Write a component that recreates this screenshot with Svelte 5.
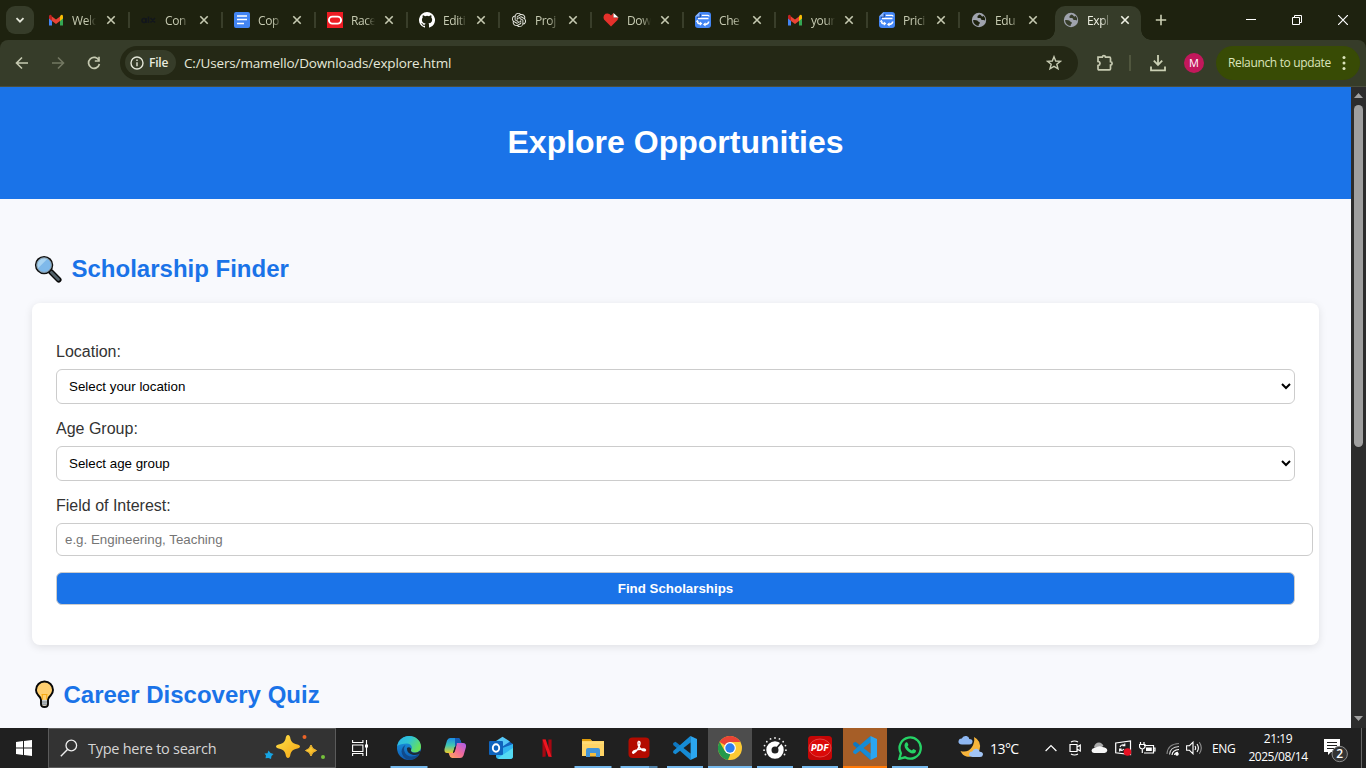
<script>
  const tabs = [
    { icon: 'gmail', title: 'Welc', w: 93 },
    { icon: 'alx', title: 'Con', w: 93 },
    { icon: 'doc', title: 'Cop', w: 93 },
    { icon: 'oracle', title: 'Race', w: 92 },
    { icon: 'github', title: 'Editi', w: 92 },
    { icon: 'gpt', title: 'Proj', w: 92 },
    { icon: 'heart', title: 'Dow', w: 92 },
    { icon: 'swap', title: 'Che', w: 92 },
    { icon: 'gmail', title: 'your', w: 92 },
    { icon: 'swap', title: 'Prici', w: 92 },
    { icon: 'globe', title: 'Edu', w: 92 },
    { icon: 'globe', title: 'Expl', w: 92, active: true }
  ];
  const apps = [
    { icon: 'edge', line: 37 },
    { icon: 'copilot' },
    { icon: 'outlook' },
    { icon: 'netflix' },
    { icon: 'files', line: 37 },
    { icon: 'acrobat', line: 37, split: true },
    { icon: 'code', line: 36 }
  ];
  const apps2 = [
    { icon: 'chrome', line: 44, state: 'current' },
    { icon: 'meter', line: 36 },
    { icon: 'pdf', line: 36 },
    { icon: 'code', line: 44, state: 'alert' },
    { icon: 'whatsapp', line: 36 }
  ];
  const dots = Array.from({ length: 11 }, (_, i) => {
    const a = (150 + i * 24) * Math.PI / 180;
    return { x: 12 + 11 * Math.cos(a), y: 13 + 11 * Math.sin(a) };
  });
</script>

{#snippet favicon(name)}
  <svg class="fav" width="16" height="16" viewBox="0 0 16 16">
    {#if name === 'gmail'}
      <path d="M1 4v9.500h3V7z" fill="#4285f4" /><path d="M15 4v9.500h-3V7z" fill="#34a853" />
      <path d="M12 4.200 13 3q2-1 2 1.500v2L12 9z" fill="#fbbc04" />
      <path d="M4 4.500 8 7.600l4-3.100V9l-4 3-4-3z" fill="#ea4335" />
      <path d="M1 4.500Q1 2 3.200 2.900L4 4.500V9L1 6.600z" fill="#c5221f" />
    {:else if name === 'alx'}
      <g fill="none" stroke="#12161c" stroke-width="1.500"><circle cx="3" cy="8.500" r="2" /><path d="M5.300 6v5M7.500 4.500V11M9.500 6l4.500 4.500M14 6l-4.500 4.500" /></g>
    {:else if name === 'doc'}
      <rect width="16" height="16" rx="2" fill="#4285f4" />
      <path d="M3 4h10M3 7.500h10M3 11.500h7" stroke="#fff" stroke-width="1.700" />
    {:else if name === 'oracle'}
      <rect width="16" height="16" fill="#ed1c24" />
      <rect x="1.900" y="4.600" width="12.200" height="7" rx="3.500" fill="none" stroke="#fff" stroke-width="1.900" />
    {:else if name === 'github'}
      <path fill="#fff" d="M8 0a8 8 0 0 0-2.530 15.590c.4.070.55-.17.55-.38v-1.490c-2.230.49-2.700-.95-2.700-.95-.36-.92-.89-1.170-.89-1.170-.73-.5.060-.49.060-.49.800.060 1.230.83 1.230.83.710 1.220 1.870.87 2.330.66.070-.52.280-.87.510-1.070-1.780-.2-3.640-.89-3.640-3.950 0-.87.310-1.590.82-2.150-.08-.2-.36-1.020.08-2.120 0 0 .67-.21 2.200.82a7.600 7.600 0 0 1 4 0c1.530-1.040 2.200-.82 2.200-.82.440 1.100.160 1.920.080 2.120.51.560.82 1.270.82 2.150 0 3.070-1.870 3.750-3.650 3.950.29.250.54.730.54 1.480v2.200c0 .21.150.46.550.38A8 8 0 0 0 8 0Z" />
    {:else if name === 'gpt'}
      <path transform="translate(.9 .9) scale(.592)" fill="#e8e9e2" d="M22.2819 9.8211a5.9847 5.9847 0 0 0-.5157-4.9108 6.0462 6.0462 0 0 0-6.5098-2.9A6.0651 6.0651 0 0 0 4.9807 4.1818a5.9847 5.9847 0 0 0-3.9977 2.9 6.0462 6.0462 0 0 0 .7427 7.0966 5.98 5.98 0 0 0 .511 4.9107 6.051 6.051 0 0 0 6.5146 2.9001A5.9847 5.9847 0 0 0 13.2599 24a6.0557 6.0557 0 0 0 5.7718-4.2058 5.9894 5.9894 0 0 0 3.9977-2.9001 6.0557 6.0557 0 0 0-.7475-7.0729zm-9.022 12.6081a4.4755 4.4755 0 0 1-2.8764-1.0408l.1419-.0804 4.7783-2.7582a.7948.7948 0 0 0 .3927-.6813v-6.7369l2.02 1.1686a.071.071 0 0 1 .038.052v5.5826a4.504 4.504 0 0 1-4.4945 4.4944zm-9.6607-4.1254a4.4708 4.4708 0 0 1-.5346-3.0137l.142.0852 4.783 2.7582a.7712.7712 0 0 0 .7806 0l5.8428-3.3685v2.3324a.0804.0804 0 0 1-.0332.0615L9.74 19.9502a4.4992 4.4992 0 0 1-6.1408-1.6464zM2.3408 7.8956a4.485 4.485 0 0 1 2.3655-1.9728V11.6a.7664.7664 0 0 0 .3879.6765l5.8144 3.3543-2.0201 1.1685a.0757.0757 0 0 1-.071 0l-4.8303-2.7865A4.504 4.504 0 0 1 2.3408 7.872zm16.5963 3.8558L13.1038 8.364 15.1192 7.2a.0757.0757 0 0 1 .071 0l4.8303 2.7913a4.4944 4.4944 0 0 1-.6765 8.1042v-5.6772a.79.79 0 0 0-.407-.667zm2.0107-3.0231l-.142-.0852-4.7735-2.7818a.7759.7759 0 0 0-.7854 0L9.409 9.2297V6.8974a.0662.0662 0 0 1 .0284-.0615l4.8303-2.7866a4.4992 4.4992 0 0 1 6.6802 4.66zM8.3065 12.863l-2.02-1.1638a.0804.0804 0 0 1-.038-.0567V6.0742a4.4992 4.4992 0 0 1 7.3757-3.4537l-.142.0805L8.704 5.459a.7948.7948 0 0 0-.3927.6813zm1.0976-2.3654l2.602-1.4998 2.6069 1.4998v2.9994l-2.5974 1.4997-2.6067-1.4997Z" />
    {:else if name === 'heart'}
      <path d="M8 14.500 1 7.500Q-.5 4 2.500 1.800 6 .5 8 3.500L10.500 1v4.500H15.500L14.500 8z" fill="#e4312b" />
      <path d="m10.500 1 5 4.500h-5z" fill="#fff" />
    {:else if name === 'swap'}
      <path d="M4.500 0H13q3 0 3 3v10q0 3-3 3H3q-3 0-3-3V4.500z" fill="#4285f4" />
      <path d="M0 4.500 4.500 0v4.500z" fill="#8db6fa" /><path d="M2 5.300h3.300V2" stroke="#1d3f88" stroke-width=".9" fill="none" />
      <path d="M6.800 3.300H13q1 0 1 1.200M3 6.500h10.500" stroke="#fff" stroke-width="1.300" fill="none" />
      <path d="M2.300 9.500q.3 2 2.200 2.100h1M13.700 9.500q-.3 2.700-3 2.900h-1" stroke="#fff" stroke-width="1.600" fill="none" />
      <path d="M4.900 9.400v4.400l2.500-2.200zM10.500 10.200v4.400L8 12.400zM.7 9.800h3.300L2.300 7.800z" fill="#fff" />
    {:else}
      <circle cx="8" cy="8" r="7.200" fill="#9fa3ad" />
      <path d="M8.300 2.400Q5.900 3.800 6.400 5.400q.8.900 2.200.6 1.300-.1 1.600 1.400.8 1 2.200.6l1.700.5q.3-3-1.600-4.700-.8 1.300-1.900.2Q10 2.600 8.300 2.400M1.900 8.200q2.600-.6 4.400.4.800 1.300 1.900 1.300 1 .4.500 1.500-1.300.8-1.100 2.500Q3 13.500 1.900 8.200" fill="var(--hole)" />
    {/if}
  </svg>
{/snippet}

{#snippet app(name)}
  <svg width="24" height="24" viewBox="0 0 24 24">
    {#if name === 'edge'}
      <defs>
        <linearGradient id="eg1" x1="0" y1="0" x2="1" y2=".5"><stop stop-color="#2bb4e8" /><stop offset=".5" stop-color="#2fc4d5" /><stop offset="1" stop-color="#66e05c" /></linearGradient>
        <linearGradient id="eg2" x1="0" y1="0" x2="0" y2="1"><stop stop-color="#1b9de2" /><stop offset="1" stop-color="#0f5cb5" /></linearGradient>
      </defs>
      <circle cx="12" cy="12" r="12" fill="url(#eg2)" />
      <path d="M.2 10C1.500 3.800 6.500 0 12 0c7 0 12 5 12 10.500 0 4-3 6-6 6-2.500 0-4.500-1-4-2.500 2-2 .5-6.500-4-6.500C6 7.500 2 8.500.2 10" fill="url(#eg1)" />
      <path d="M8.500 9C5 13 8 20.500 14.500 20.500q4 .1 8-2.700Q19 24 12 24 5 22 4.500 15.500 5 10.500 8.500 9" fill="#114a8b" />
      <path d="M14 14c-.5 1.500 1.500 2.800 4 2.800q2.500 0 5.200-2l1 2q-4.200 3-8.700 2Q9.500 17 10 12q2-1.500 4 .5z" fill="#202020" opacity=".85" />
    {:else if name === 'copilot'}
      <defs>
        <linearGradient id="cp1" x1="0" y1="0" x2="0" y2="1"><stop stop-color="#1b8de6" /><stop offset=".5" stop-color="#42c7b0" /><stop offset="1" stop-color="#eccb2a" /></linearGradient>
        <linearGradient id="cp2" x1="1" y1="0" x2="0" y2="1"><stop stop-color="#a65cf0" /><stop offset=".5" stop-color="#f16b99" /><stop offset="1" stop-color="#ffac55" /></linearGradient>
      </defs>
      <path d="M7 2h8q2 0 2.700 3l1 3h-4q-2 0-2.500 2L10 17H4q-3 0-2.500-4L4 4.500Q5 2 7 2" fill="url(#cp1)" />
      <path d="M17 22H9q-2 0-2.700-3l-.7-2h3.800q2 0 2.600-2L14 7h6q3.500 0 3 4l-2.500 8.500Q19.500 22 17 22" fill="url(#cp2)" />
      <path d="M12 2h3q2 0 2.700 3l.7 2H14l-2 5z" fill="#1559b8" /><path d="m13 10.500-1.500 5q-.5 1.500-1.500 1.500l1.500-5.500q.5-1 1.500-1" fill="#202020" />
    {:else if name === 'outlook'}
      <path d="M5 9 14 1.500 24 8v3L12 17z" fill="#1266c0" /><path d="m5.500 6 8-5.200 7.500 4.700-9 6z" fill="#56c8f7" />
      <path d="M8 14 24 8v12q0 3-3 3H10q-3 0-3-3z" fill="#31b5f0" /><path d="m9 22 15-10v8q0 3-3 3H10z" fill="#54daf2" />
      <rect y="5" width="14" height="14" rx="1" fill="#0f64bd" /><ellipse cx="7" cy="12" rx="3.200" ry="3.700" fill="none" stroke="#fff" stroke-width="1.900" />
    {:else if name === 'netflix'}
      <path d="M7.500 3.500h3.200v17l-3.200.4zM13.400 3.500h3.200v17.400l-3.200-.4z" fill="#a70711" /><path d="M7.500 3.500h3.200l5.900 17.400-3.200-.4z" fill="#ef1621" />
    {:else if name === 'files'}
      <path d="M1 3h8l2 2h12v15H1z" fill="#ffd466" /><path d="M1 3h8l2 2H1z" fill="#df9c0a" /><path d="M1 6h22v2H1z" fill="#ffdb75" />
      <path d="M5 21v-7q0-2 2-2h10q2 0 2 2v7h-4v-4H9v4z" fill="#4294d8" /><path d="M9 17h6v3.500H9z" fill="#f4bd3c" />
    {:else if name === 'acrobat'}
      <rect x="1.500" y="1.500" width="21" height="20.500" rx="4" fill="#b30b00" />
      <path d="M11.400 5.500q1.800-.6 1.500 2.400Q12 13.500 6.500 17.200 4.800 17 6.500 15.200 11 12.800 17 13q2.300.8 1 1.700-4 .2-6.700-5.400-.7-3 .1-3.800" fill="none" stroke="#fff" stroke-width="1.500" />
    {:else if name === 'code'}
      <path d="M17.500 0 7.300 9.400 2.500 5.700.2 6.900v2L17.500 24z" fill="#0f77bf" />
      <path d="M17.500 24 7.300 14.600l-4.800 3.700-2.300-1.200v-2L17.500 0z" fill="#168bd4" />
      <path d="M17.500 0 24 3v18l-6.500 3V0" fill="#2ba6f0" /><path d="M17.500 6.500v11L10.500 12z" fill="var(--hole)" />
    {:else if name === 'chrome'}
      <circle cx="12" cy="12" r="12" fill="#fcc934" />
      <path d="M12 12 1.600 6A12 12 0 0 1 22.400 6H12z" fill="#ea4335" /><path d="M1.600 6 6.800 15l5.200 3v-.1L12 24A12 12 0 0 1 1.600 6" fill="#23994b" /><path d="m17.200 15-5.200 9q-1 0-2-.2L13 17z" fill="#fcc934" />
      <circle cx="12" cy="12" r="5.900" fill="#fff" /><circle cx="12" cy="12" r="4.700" fill="#2d7df0" />
    {:else if name === 'meter'}
      {#each dots as d}<circle cx={d.x} cy={d.y} r=".9" fill="#eee" />{/each}
      <circle cx="12" cy="14" r="6.100" fill="none" stroke="#fff" stroke-width="5.200" /><path d="m12 14 6-7" stroke="#202020" stroke-width="1.700" /><circle cx="12" cy="14" r="2.800" fill="#202020" />
    {:else if name === 'pdf'}
      <rect width="24" height="24" rx="3.500" fill="#c50606" /><ellipse cx="12" cy="12" rx="11" ry="9" fill="#db0909" stroke="#ee6868" stroke-width=".6" />
      <text x="12" y="15.400" text-anchor="middle" font-size="8.500" font-weight="700" font-style="italic" fill="#fff" font-family="DejaVu Sans, sans-serif" textLength="18" lengthAdjust="spacingAndGlyphs">PDF</text>
    {:else if name === 'whatsapp'}
      <path d="m1.400 22.800 1.500-5.600a10.600 10.600 0 1 1 4.100 4.100z" fill="#202020" stroke="#25d366" stroke-width="2.300" />
      <path d="M8 6.300q1-.5 1.500.5l.9 2q.1.600-1 1.800 1.500 2.900 4.500 4 1-1.500 1.500-1.500l2.500 1.200q.5 3-3 3.200-3.700-.3-7-4.300Q5 9 8 6.300" fill="#25d366" />
    {/if}
  </svg>
{/snippet}

<div class="screen">
  <div class="browser">
    <div class="tabstrip">
      <div class="tabsearch"><svg width="10" height="10" viewBox="0 0 10 10"><path d="m1.500 3.200 3.500 3.500 3.500-3.500" fill="none" stroke="#e3e6d8" stroke-width="1.800" /></svg></div>
      {#each tabs as t, i}
        <div class="tab" class:active={t.active} class:last={i >= 10} style:width={`${t.w}px`}>
          {@render favicon(t.icon)}
          <span class="title">{t.title}</span>
          <svg class="close" width="10" height="10" viewBox="0 0 10 10"><path d="m1.300 1.300 7.400 7.400M8.700 1.300 1.300 8.700" fill="none" stroke="currentColor" stroke-width="1.600" /></svg>
        </div>
      {/each}
      <svg class="newtab" width="12" height="12" viewBox="0 0 12 12"><path d="M6 .8v10.400M.8 6h10.400" stroke="#cbd0b4" stroke-width="1.600" /></svg>
      <div class="winbtns">
        <svg width="10" height="10" viewBox="0 0 10 10"><path d="M0 4.500h10" stroke="#fff" /></svg>
        <svg width="10" height="10" viewBox="0 0 10 10"><path d="M.5 2.500h7v7h-7zM2.500 2.500v-2h7v7h-2" fill="none" stroke="#fff" /></svg>
        <svg width="10" height="10" viewBox="0 0 10 10"><path d="m0 0 10 10M10 0 0 10" stroke="#fff" stroke-width="1.200" /></svg>
      </div>
    </div>
    <div class="toolbar">
      <svg class="nav" width="16" height="16" viewBox="0 0 16 16"><path d="M14 8H3M8 2.500 2.500 8 8 13.500" fill="none" stroke="#c6cab1" stroke-width="1.600" /></svg>
      <svg class="nav" width="16" height="16" viewBox="0 0 16 16"><path d="M2 8h11M8 2.500 13.500 8 8 13.500" fill="none" stroke="#737862" stroke-width="1.600" /></svg>
      <svg class="nav" width="16" height="16" viewBox="0 0 16 16"><path d="M13 5.500A5.500 5.500 0 1 0 13.400 9" fill="none" stroke="#c6cab1" stroke-width="1.700" /><path d="M13.800 1.800v5H8.800V5.200h3.400V1.800z" fill="#c6cab1" /></svg>
      <div class="omnibox">
        <div class="chip">
          <svg width="14" height="14" viewBox="0 0 14 14"><circle cx="7" cy="7" r="6" fill="none" stroke="#e3e6d8" stroke-width="1.400" /><path d="M7 6.200v4M7 3.500v1.500" stroke="#e3e6d8" stroke-width="1.400" /></svg>
          <span>File</span>
        </div>
        <span class="url">C:/Users/mamello/Downloads/explore.html</span>
        <svg width="16" height="16" viewBox="0 0 16 16"><path d="m8 1.700 1.700 4.300 4.700.3-3.600 3 1.200 4.500L8 11.300l-4 2.500 1.200-4.500-3.600-3L6.300 6z" fill="none" stroke="#c6cab1" stroke-width="1.400" /></svg>
      </div>
      <svg class="puzzle" width="18" height="18" viewBox="0 0 18 18"><path d="M2 3.200h4.300q.2-1.500 1.600-1.500t1.600 1.500h4q1 0 1 1v3.500q1.600.2 1.600 1.700t-1.600 1.700v3.700q0 1-1 1H3q-1 0-1-1v-3.300q2-.4 2-2.100T2 7.500z" fill="none" stroke="#c6cab1" stroke-width="1.700" /></svg>
      <i class="bar"></i>
      <svg class="dl" width="18" height="18" viewBox="0 0 18 18"><path d="M9 1v9.500M4.800 6.700 9 11l4.200-4.300M2 12.500v3.800h14v-3.800" fill="none" stroke="#cbd0b4" stroke-width="1.800" /></svg>
      <div class="avatar">M</div>
      <div class="relaunch"><span>Relaunch to update</span><svg width="4" height="14" viewBox="0 0 4 14" fill="#dce5bb"><circle cx="2" cy="1.600" r="1.500" /><circle cx="2" cy="7" r="1.500" /><circle cx="2" cy="12.400" r="1.500" /></svg></div>
    </div>
  </div>

  <div class="viewport">
    <main>
      <header><h1>Explore Opportunities</h1></header>
      <section>
        <h2>
          <svg width="28" height="28" viewBox="0 0 30 30"><path d="m18 18 8.500 8.500" stroke="#080808" stroke-width="6" stroke-linecap="round" /><path d="m18.500 18.500 7.700 7.700" stroke="#53626a" stroke-width="3" stroke-linecap="round" /><circle cx="10.800" cy="10.800" r="9" fill="#7fb9ea" stroke="#111" stroke-width="1.700" /><path d="M4 14.500 14.500 4Q10 2 6 5.500T4 14.500" fill="#a9d4f2" /><circle cx="10.800" cy="10.800" r="7.800" fill="none" stroke="#8d979c" stroke-width=".9" /></svg>
          <span>Scholarship Finder</span>
        </h2>
        <form onsubmit={(e) => e.preventDefault()}>
          <label for="loc">Location:</label>
          <select id="loc"><option>Select your location</option></select>
          <label for="age">Age Group:</label>
          <select id="age"><option>Select age group</option></select>
          <label for="field">Field of Interest:</label>
          <input id="field" type="text" placeholder="e.g. Engineering, Teaching" />
          <button>Find Scholarships</button>
        </form>
        <h2 class="quiz">
          <svg width="22" height="30" viewBox="0 0 22 30"><path d="M7 24v-4.500Q6.500 17.500 4 15 2 12.500 2 10a8.500 8.500 0 0 1 17 0q0 2.500-2 5-2.500 2.500-3 4.500V24q0 3-3.500 3T7 24" fill="#ffcf70" stroke="#080808" stroke-width="1.900" /><path d="M8 20h5v4q0 2-2.500 2T8 24z" fill="#c9ced2" /><path d="M8 22h5M8 24.200h5" stroke="#70787c" stroke-width=".9" /><path d="M8.300 19.500v-5M12.700 19.500v-5M7.500 14.500h6" stroke="#f5a913" stroke-width="1.100" /></svg>
          <span>Career Discovery Quiz</span>
        </h2>
      </section>
    </main>
    <div class="scroll">
      <svg width="9" height="5" viewBox="0 0 9 5"><path d="M4.500 0 9 5H0z" fill="#a0a0a0" /></svg>
      <i></i>
      <svg class="down" width="9" height="5" viewBox="0 0 9 5"><path d="M4.500 5 0 0h9z" fill="#a0a0a0" /></svg>
    </div>
  </div>

  <div class="taskbar">
    <div class="start"><svg width="16" height="16" viewBox="0 0 16 16" fill="#fff"><path d="m0 2 7-1v6.500H0zM8 .9 16 0v7.500H8zM0 8.500h7V15l-7-1zM8 8.500h8V16l-8-1z" /></svg></div>
    <div class="search">
      <svg width="18" height="18" viewBox="0 0 18 18"><circle cx="11.300" cy="6.500" r="5.300" fill="none" stroke="#eee" stroke-width="1.300" /><path d="M7.500 10.500.8 17.200" stroke="#eee" stroke-width="1.400" /></svg>
      <span>Type here to search</span>
      <svg class="sparkles" width="62" height="28" viewBox="0 0 62 28">
        <defs><linearGradient id="sp" x1="0" y1="0" x2="1" y2="1"><stop stop-color="#ffe249" /><stop offset="1" stop-color="#f4a413" /></linearGradient></defs>
        <path d="M24 1q2 0 2.500 4 1 4 5 5 4.500.7 4.500 2.500t-4.500 2.500q-4 1-5 5-.5 4-2.500 4t-2.500-4q-1-4-5-5Q12 14.300 12 12.500t4.500-2.500q4-1 5-5 .5-4 2.500-4" fill="url(#sp)" />
        <path d="M47 11q.9 4.200 5.500 5.500-4.600 1.300-5.500 5.500-.9-4.200-5.500-5.500 4.600-1.300 5.500-5.500" fill="url(#sp)" stroke="#f8bb30" />
        <path d="m4.500 16.500 2 2.500 3 1-2 2-.5 3-2.500-1-3 .3.500-2.800-1.500-2 3-.3z" fill="#16a5e4" /><circle cx="40.500" cy="3" r="2" fill="#ec6428" /><circle cx="59" cy="23" r="2" fill="#75c13b" />
      </svg>
    </div>
    <div class="slot view"><svg width="16" height="16" viewBox="0 0 16 16"><path d="M.6 0v2.500h10.300V0M.6 5h10.300v6.500H.6zM.6 16v-2.500h10.300V16M14.500 0v16" fill="none" stroke="#fff" stroke-width="1.100" /><path d="M13 4.500h3v3h-3z" fill="#fff" /></svg></div>
    {#each apps as a}
      <div class="slot">{@render app(a.icon)}{#if a.line}<i class="line" class:split={a.split} style:width={`${a.line}px`}></i>{/if}</div>
    {/each}
    {#each apps2 as a}
      <div class={['slot', 'narrow', a.state]}>{@render app(a.icon)}<i class="line" style:width={`${a.line}px`}></i></div>
    {/each}
    <div class="tray">
      <svg class="weather" width="27" height="24" viewBox="0 0 27 24"><path d="M16 2q8 4 5.500 13-4 8-13 6.500-4-1-6-5.500Q10 18 14 12q3-5 2-10" fill="#f8b53b" /><path d="M4 9.500q-4-.3-3.500-3.500Q1 3.500 3.800 3.600 5 .3 8.500 1q2.500.7 2.800 3 3.500.2 3.200 3-.5 2.500-3 2.500z" fill="#8eb7f2" /><path d="M14.500 22q-4-.3-3.300-3.400.5-2 3-2 1.300-3.300 4.500-2.800 2.700.7 3 3 3.200 0 3.300 2.600-.3 2.500-3 2.600z" fill="#a2c5f6" /></svg>
      <span class="temp">13°C</span>
      <svg class="t1" width="12" height="8" viewBox="0 0 12 8"><path d="m.6 7 5.400-5.500L11.400 7" fill="none" stroke="#fff" stroke-width="1.200" /></svg>
      <svg class="t2" width="12" height="16" viewBox="0 0 12 16"><path d="M1 4.500h7v7H1zM8 7l3.300-2v6L8 9M2 2q3.500-2 7 0M2 14q3.500 2 7 0" fill="none" stroke="#fff" stroke-width="1.200" /></svg>
      <svg class="t3" width="17" height="12" viewBox="0 0 17 12"><path d="M3 5Q4 .5 8 .5q3 0 4.500 3.500l-7 4z" fill="#aaa" /><path d="M3 11Q.5 10.500.5 8.500 1 5.500 4 6q4-3 7.500-1 4.800.5 4.800 3.500-.3 2.300-2.800 2.500z" fill="#f7f7f7" /></svg>
      <svg class="t4" width="17" height="16" viewBox="0 0 17 16"><path d="m.7 3 14.800-2v13.500L.7 12.800z" fill="none" stroke="#fff" stroke-width="1.200" /><path d="M5 7q1-3 4.500-2M9.800 3.500v2.300H7.500M9 9q-2 2.500-4 .5M4.600 11.500V9h2" fill="none" stroke="#fff" stroke-width="1.100" /><circle cx="12.500" cy="12" r="3.800" fill="#e81123" /></svg>
      <svg class="t5" width="17" height="12" viewBox="0 0 17 12"><path d="M5 3.500h9.500v7.500H5M14.500 6H16v3h-1.500M1.500 0v2.500M5 0v2.500M.5 2.500H6V5Q5 7 3.300 7 .5 6.500.5 4.500zM3.300 7v4" fill="none" stroke="#fff" stroke-width="1.200" /><path d="M7 5.500h5.800V9H7z" fill="#fff" /></svg>
      <svg class="t6" width="14" height="14" viewBox="0 0 14 14" fill="none" stroke="#fff" stroke-width="1.100"><path d="M1 12Q1.500 2 13 1.500" opacity=".45" /><path d="M3.500 12.500Q4 5 13 4.500" opacity=".8" /><path d="M6 13Q6.500 8 13 7.500M8.500 13Q9 10.500 12 10.300" /><circle cx="11" cy="12" r="1.200" fill="#fff" /></svg>
      <svg class="t7" width="17" height="14" viewBox="0 0 17 14" fill="none" stroke="#fff" stroke-width="1.100"><path d="M.6 4.700h2.900l3.500-3.500v11.600L3.500 9.300H.6zM9 5q1.300 2 0 4M11 3q2.800 4 0 8" /><path d="M13.300 1.300q4 5.700 0 11.400" opacity=".5" /></svg>
      <span class="eng">ENG</span>
      <div class="clock"><span>21:19</span><span class="date">2025/08/14</span></div>
      <svg class="note" width="25" height="26" viewBox="0 0 25 26"><path d="M0 1h16v13H7l-3 3v-3H0z" fill="#fff" /><path d="M3 4.500h10M3 7.500h10M3 10.500h7" stroke="#202020" /><circle cx="15.700" cy="16" r="7.700" fill="#333" stroke="#8c8c8c" /><text x="15.700" y="20.300" text-anchor="middle" font-size="12" font-weight="600" fill="#fff">2</text></svg>
      <i class="edge"></i>
    </div>
  </div>
</div>

<style>
  :global(body) { margin: 0; overflow: hidden; }
  * { box-sizing: border-box; }
  svg { display: block; flex: none; }
  .screen { width: 1366px; height: 768px; display: grid; grid-template-rows: 87px 641px 40px; overflow: hidden; font-family: 'Open Sans', 'Noto Sans', sans-serif; }
  .browser { background: #1e220f; display: flex; flex-direction: column; }
  .tabstrip { height: 40px; display: flex; align-items: center; }
  .tabsearch { width: 28px; height: 28px; margin: 0 3px 0 6px; border-radius: 9px; background: #363c29; display: grid; place-items: center; flex: none; }
  .tab { --hole: #1e220f; height: 28px; flex: none; display: flex; align-items: center; padding: 0 14px 0 11px; color: #c6cab1; background: linear-gradient(#393e2a, #393e2a) right center / 2px 16px no-repeat; }
  .tab.last { background: none; }
  .title { width: 25px; margin: 1px 0 0 8px; flex: none; overflow: hidden; white-space: nowrap; font-size: 12px; line-height: 18px; letter-spacing: -.4px; mask-image: linear-gradient(90deg, #000 58%, transparent 96%); }
  .close { margin-left: auto; }
  .tab.active { --hole: #363c29; height: 34px; align-self: flex-end; position: relative; color: #f0f2e5; z-index: 0; padding-bottom: 6px; }
  .tab.active::before { content: ''; position: absolute; z-index: -1; inset: 0 3px; background: #363c29; border-radius: 10px 10px 0 0; }
  .tab.active::after { content: ''; position: absolute; z-index: -1; bottom: 0; left: -7px; width: 106px; height: 10px; background: radial-gradient(circle at 0 0, transparent 9.500px, #363c29 10px) left / 10px 10px no-repeat, radial-gradient(circle at 100% 0, transparent 9.500px, #363c29 10px) right / 10px 10px no-repeat; }
  .newtab { margin-left: 11px; }
  .winbtns { margin-left: auto; display: flex; gap: 36px; padding-right: 18px; }
  .toolbar { height: 47px; padding-bottom: 1px; background: #363c29; border-radius: 8px 8px 0 0; border-bottom: 1px solid #4a4e3d; display: flex; align-items: center; padding-left: 14px; }
  .nav { margin-right: 20px; }
  .omnibox { width: 958px; height: 34px; margin-left: -2px; border-radius: 17px; background: #242815; display: flex; align-items: center; padding: 0 16px 0 5px; flex: none; }
  .chip { width: 51px; height: 25px; border-radius: 13px; background: #363c29; display: flex; align-items: center; gap: 5px; padding-left: 5px; color: #e9ebdf; font-size: 12px; font-weight: 600; letter-spacing: -.2px; }
  .url { margin-left: 8px; margin-right: auto; font-size: 13.500px; letter-spacing: -.15px; color: #e6e8da; white-space: nowrap; }
  .puzzle { margin-left: 18px; }
  .bar { width: 2px; height: 16px; background: #50563e; margin: 0 18px 0 15px; }
  .dl { margin-right: 17px; }
  .avatar { width: 20px; height: 20px; border-radius: 50%; background: #c2185b; color: #fff; font-size: 11px; line-height: 20px; text-align: center; }
  .relaunch { width: 144px; height: 34px; margin-left: 12px; border-radius: 17px; background: #384b05; color: #dce5bb; display: flex; align-items: center; justify-content: space-between; padding: 0 14px 0 12px; font-size: 12px; white-space: nowrap; letter-spacing: -.35px; }
  .viewport { display: flex; min-height: 0; overflow: hidden; background: #f8f9fd; }
  main { width: 1351px; font-family: 'Liberation Sans', Arial, sans-serif; color: #333; }
  header { height: 112px; background: #1a73e8; display: grid; place-items: center; }
  h1 { margin: 0; color: #fff; font-size: 32px; line-height: 37px; padding-bottom: 2px; }
  section { padding: 54px 32px 0; }
  h2 { margin: 0 0 18px 2px; height: 32px; display: flex; align-items: center; gap: 9.500px; color: #1a73e8; font-size: 24px; line-height: 32px; }
  h2.quiz { margin-top: 34px; gap: 7.500px; }
  form { height: 342px; background: #fff; border-radius: 8px; box-shadow: 0 2px 8px #0000001a; padding: 40px 24px; display: flex; flex-direction: column; }
  label { font-size: 16px; line-height: 18px; margin-bottom: 8px; }
  select, input, button { font: 13.333px 'Liberation Sans', Arial, sans-serif; border: 1px solid #ccc; border-radius: 6px; padding: 8px; flex: none; margin: 0; }
  select { height: 35px; margin-bottom: 16px; background: #fff; color: #000; }
  input { height: 33px; width: 1257px; margin-bottom: 16px; }
  button { height: 33px; background: #1a73e8; color: #fff; font-weight: 700; }
  .scroll { width: 15px; background: #2c2c2c; display: flex; flex-direction: column; align-items: center; padding: 6px 0 7px; }
  .scroll i { width: 9px; height: 342px; margin-top: 7px; border-radius: 5px; background: #9f9f9f; }
  .down { margin-top: auto; }
  .taskbar { background: #202020; color: #fff; display: flex; --hole: #202020; }
  .start { width: 48px; display: grid; place-items: center; }
  .search { width: 288px; margin-right: 1px; border: 1px solid #5b5b5b; background: #333; display: flex; align-items: center; padding: 0 9px 0 11px; color: #d5d5d5; font-size: 14.500px; white-space: nowrap; }
  .search span { margin-left: 10px; letter-spacing: -.27px; }
  .sparkles { margin-left: auto; margin-top: -1px; }
  .slot { width: 46px; flex: none; display: grid; place-items: center; position: relative; }
  .view { margin-right: 3px; }
  .narrow { width: 44px; margin-right: 1px; }
  .current { background: #4d4d4d; }
  .alert { background: #a65e27; --hole: #a65e27; }
  .line { position: absolute; bottom: 0; left: 50%; transform: translateX(-50%); height: 2px; background: #76b9ed; }
  .split { background: linear-gradient(90deg, #76b9ed 28px, #5284ab 28px); }
  .alert .line { background: #ff7a08; }
  .tray { flex: 1; display: flex; align-items: center; font-size: 12px; white-space: nowrap; }
  .weather { margin-left: 25px; margin-bottom: 2px; }
  .temp { width: 30px; margin-left: 5px; font-size: 14px; letter-spacing: -.55px; }
  .t1 { margin-left: 25px; } .t2 { margin-left: 12px; } .t3 { margin-left: 10px; } .t4 { margin-left: 7px; }
  .t5 { margin-left: 7px; } .t6 { margin-left: 10px; margin-top: 2px; } .t7 { margin-left: 6px; }
  .eng { width: 24px; margin-left: 9px; letter-spacing: -.4px; }
  .clock { width: 60px; margin-left: 12px; display: flex; flex-direction: column; align-items: center; line-height: 18px; letter-spacing: -.45px; }
  .note { margin-left: 16px; margin-top: 5px; }
  .edge { width: 1px; height: 40px; margin-left: 12px; background: #666; }
</style>
